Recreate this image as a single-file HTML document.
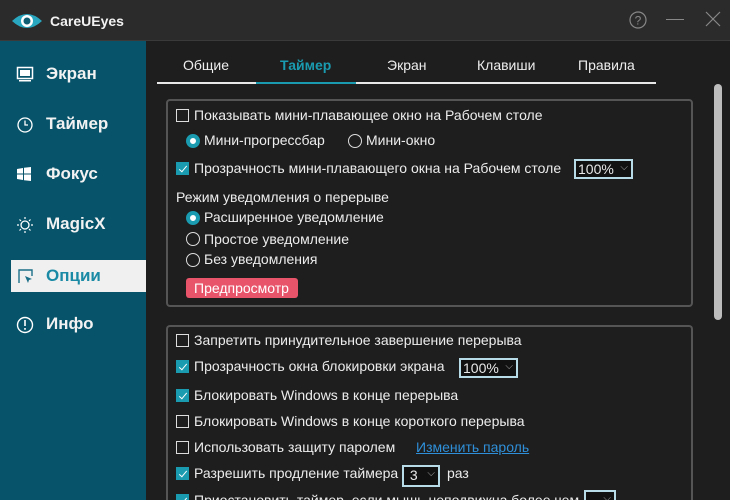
<!DOCTYPE html><html style="width:730px;height:500px;overflow:hidden"><head><meta charset="utf-8"><style>
*{margin:0;padding:0;box-sizing:border-box}
html,body{width:730px;height:500px;overflow:hidden}
body{background:#1e1e1e;font-family:"Liberation Sans",sans-serif;color:#e8e8e8;position:relative}
.title{position:absolute;left:0;top:0;width:730px;height:41px;background:#2b2b2b;border-bottom:1px solid #3a3a3a}
.side{position:absolute;left:0;top:41px;width:146px;height:459px;background:#06536a}
.nav{position:absolute;left:0;width:146px;height:30px;font-weight:bold;font-size:17px;color:#f2f2f2}
.nav span{position:absolute;left:46px;top:5px}
.nav svg{position:absolute;left:16px;top:7px}
.tab{position:absolute;top:57px;font-size:14px;color:#eee}
.box{position:absolute;left:166px;width:527px;border:2px solid #555;border-radius:4px}
.t{position:absolute;font-size:14px;color:#ececec;white-space:nowrap}
.cb{position:absolute;width:13px;height:13px;border:1px solid #ddd}
.cb.on{background:#1a9bb0;border-color:#1a9bb0}
.cb.on:after{content:"";position:absolute;left:4px;top:1px;width:3px;height:7px;border:solid #fff;border-width:0 1.5px 1.5px 0;transform:rotate(40deg)}
.rd{position:absolute;width:14px;height:14px;border:1px solid #ddd;border-radius:50%}
.rd.on{border:4px solid #1a9bb0;background:#fff}
.sel{position:absolute;height:20px;border:2px solid #b8dbe8;background:#111;font-size:14px;padding-left:2px;line-height:16px}
.sel:after{content:"⌵";position:absolute;right:3px;top:-1px;font-size:10px;color:#aaa}
</style></head><body>
<div class="title">
<svg style="position:absolute;left:11px;top:11px" width="32" height="20" viewBox="0 0 32 20"><path d="M1 10Q16 -4 31 10Q16 24 1 10Z" fill="#2aa7c0"/><circle cx="16" cy="10" r="6" fill="#fff"/><circle cx="16" cy="10" r="3.5" fill="#0f5d72"/></svg>
<div style="position:absolute;left:50px;top:13px;font-weight:bold;font-size:14px;color:#f2f2f2">CareUEyes</div>
<svg style="position:absolute;left:629px;top:11px" width="18" height="18"><circle cx="9" cy="9" r="8" fill="none" stroke="#888" stroke-width="1.2"/><text x="9" y="13.5" font-size="12" text-anchor="middle" fill="#888" font-family="Liberation Sans">?</text></svg>
<div style="position:absolute;left:666px;top:19px;width:18px;height:1px;background:#888"></div>
<svg style="position:absolute;left:705px;top:11px" width="16" height="16"><path d="M1 1L15 15M15 1L1 15" stroke="#888" stroke-width="1.2"/></svg>
</div>
<div class="side">
<div class="nav" style="top:18px"><svg width="18" height="16"><rect x="1.5" y="1.5" width="15" height="11" fill="none" stroke="#fff" stroke-width="1.5"/><rect x="4" y="4" width="10" height="6" fill="#fff"/><rect x="3" y="14" width="12" height="1.5" fill="#fff"/></svg><span>Экран</span></div>
<div class="nav" style="top:68px"><svg width="18" height="18"><circle cx="9" cy="9" r="7" fill="none" stroke="#fff" stroke-width="1.3"/><path d="M9 4.5V9H12" fill="none" stroke="#fff" stroke-width="1.3"/></svg><span>Таймер</span></div>
<div class="nav" style="top:118px"><svg width="16" height="16"><path d="M1 3L7 2V7.5H1ZM8 1.8L15 1V7.5H8ZM1 8.5H7V14L1 13ZM8 8.5H15V15L8 14.2Z" fill="#fff"/></svg><span>Фокус</span></div>
<div class="nav" style="top:168px"><svg width="18" height="18"><circle cx="9" cy="9" r="4" fill="none" stroke="#fff" stroke-width="1.3"/><path d="M9 1V3M9 15V17M1 9H3M15 9H17M3.5 3.5L5 5M13 13L14.5 14.5M3.5 14.5L5 13M13 5L14.5 3.5" stroke="#fff" stroke-width="1.2"/></svg><span>MagicX</span></div>
<div class="nav" style="top:219px;left:11px;width:135px;height:32px;background:#f0f0f0;color:#1a8aa5"><svg style="left:7px;top:9px" width="16" height="16"><path d="M1 14V1H14V7" fill="none" stroke="#1a6f88" stroke-width="1.4"/><path d="M7 7L14 10L11 11L10 14Z" fill="#1a6f88"/></svg><span style="left:35px;top:6px">Опции</span></div>
<div class="nav" style="top:268px"><svg width="18" height="18"><circle cx="9" cy="9" r="7.5" fill="none" stroke="#fff" stroke-width="1.4"/><rect x="8.2" y="4" width="1.6" height="6" fill="#fff"/><rect x="8.2" y="12" width="1.6" height="1.8" fill="#fff"/></svg><span>Инфо</span></div>
</div>
<div class="tab" style="left:183px">Общие</div>
<div class="tab" style="left:280px;color:#1a9bb0;font-weight:bold">Таймер</div>
<div class="tab" style="left:387px">Экран</div>
<div class="tab" style="left:477px">Клавиши</div>
<div class="tab" style="left:578px">Правила</div>
<div style="position:absolute;left:157px;top:82px;width:499px;height:2px;background:#e8e8e8"></div>
<div style="position:absolute;left:256px;top:82px;width:100px;height:2px;background:#1a9bb0"></div>
<div style="position:absolute;left:714px;top:84px;width:8px;height:236px;background:#bdbdbd;border-radius:4px"></div>
<div class="box" style="top:99px;height:208px"></div>
<div class="cb" style="left:176px;top:109px"></div><div class="t" style="left:194px;top:107px">Показывать мини-плавающее окно на Рабочем столе</div>
<div class="rd on" style="left:186px;top:134px"></div><div class="t" style="left:204px;top:132px">Мини-прогрессбар</div>
<div class="rd" style="left:348px;top:134px"></div><div class="t" style="left:366px;top:132px">Мини-окно</div>
<div class="cb on" style="left:176px;top:162px"></div><div class="t" style="left:194px;top:160px">Прозрачность мини-плавающего окна на Рабочем столе</div>
<div class="sel" style="left:574px;top:159px;width:59px">100%</div>
<div class="t" style="left:176px;top:189px">Режим уведомления о перерыве</div>
<div class="rd on" style="left:186px;top:211px"></div><div class="t" style="left:204px;top:209px">Расширенное уведомление</div>
<div class="rd" style="left:186px;top:232px"></div><div class="t" style="left:204px;top:231px">Простое уведомление</div>
<div class="rd" style="left:186px;top:253px"></div><div class="t" style="left:204px;top:251px">Без уведомления</div>
<div style="position:absolute;left:186px;top:278px;width:112px;height:20px;background:#e8556b;border-radius:3px;font-size:14px;color:#fff;padding-left:8px;line-height:20px">Предпросмотр</div>
<div class="box" style="top:325px;height:175px;border-bottom:none;border-radius:4px 4px 0 0"></div>
<div class="cb" style="left:176px;top:334px"></div><div class="t" style="left:194px;top:332px">Запретить принудительное завершение перерыва</div>
<div class="cb on" style="left:176px;top:360px"></div><div class="t" style="left:194px;top:358px">Прозрачность окна блокировки экрана</div>
<div class="sel" style="left:459px;top:358px;width:59px">100%</div>
<div class="cb on" style="left:176px;top:389px"></div><div class="t" style="left:194px;top:387px">Блокировать Windows в конце перерыва</div>
<div class="cb" style="left:176px;top:415px"></div><div class="t" style="left:194px;top:413px">Блокировать Windows в конце короткого перерыва</div>
<div class="cb" style="left:176px;top:441px"></div><div class="t" style="left:194px;top:439px">Использовать защиту паролем</div>
<div class="t" style="left:416px;top:439px;color:#2f8fd8;text-decoration:underline">Изменить пароль</div>
<div class="cb on" style="left:176px;top:467px"></div><div class="t" style="left:194px;top:465px">Разрешить продление таймера</div>
<div class="sel" style="left:402px;top:465px;width:38px;height:22px">&nbsp;3</div>
<div class="t" style="left:447px;top:465px">раз</div>
<div class="cb on" style="left:176px;top:494px"></div><div class="t" style="left:194px;top:492px">Приостановить таймер, если мышь неподвижна более чем</div>
<div class="sel" style="left:584px;top:490px;width:32px"></div>
</body></html>
